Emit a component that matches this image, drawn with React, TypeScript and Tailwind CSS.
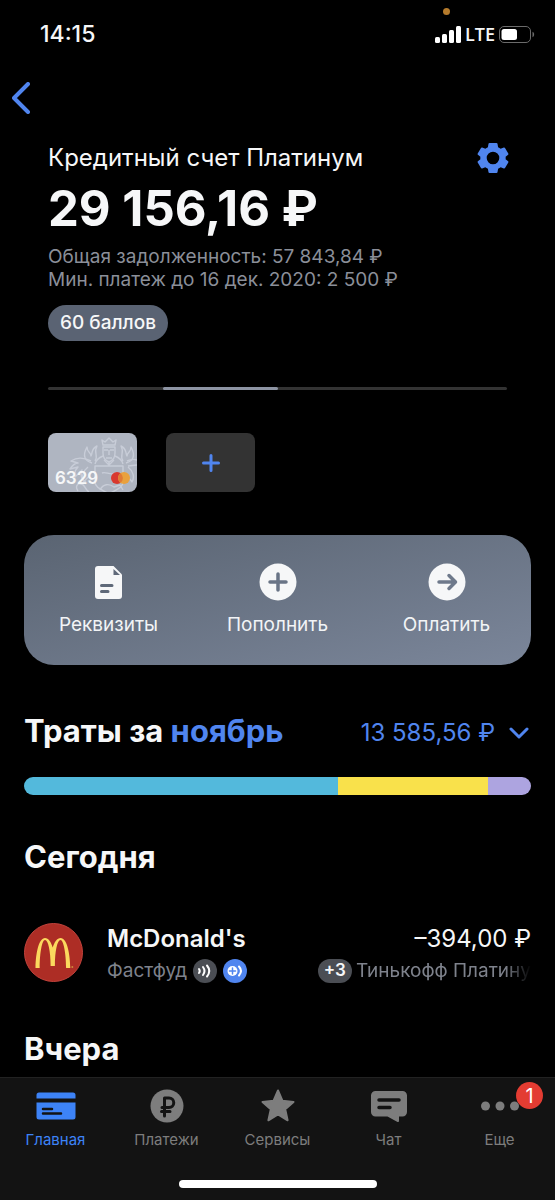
import type { ReactNode } from "react";

const spending = [
  { label: "Категория 1", share: 62, color: "bg-[#53b9dc]" },
  { label: "Категория 2", share: 29.6, color: "bg-[#f9e14b]" },
  { label: "Категория 3", share: 8.4, color: "bg-[#ada4e0]" },
];

function StatusBar() {
  return (
    <div className="flex h-[68px] items-center justify-between pl-10 pr-5">
      <span className="text-[23px] font-medium">14:15</span>
      <div className="relative flex items-center gap-1">
        <span className="absolute -top-3 left-2 h-[7px] w-[7px] rounded-full bg-[#b57b2c]" />
        <svg width="26" height="17" viewBox="0 0 26 17" fill="#fff">
          <rect x="0" y="11" width="5" height="6" rx="1.5" />
          <rect x="7" y="8" width="5" height="9" rx="1.5" />
          <rect x="14" y="4" width="5" height="13" rx="1.5" />
          <rect x="21" y="0" width="5" height="17" rx="1.5" />
        </svg>
        <span className="font-['Open_Sans',sans-serif] text-lg leading-7 font-semibold">LTE</span>
        <svg width="36" height="17" viewBox="0 0 36 17" fill="none">
          <rect x="0.5" y="0.5" width="31" height="16" rx="4.5" stroke="#6b6b6b" />
          <rect x="2.5" y="3" width="15.5" height="11" rx="2.5" fill="#fff" />
          <path d="M33.5 5.8c2.2.8 2.2 4.6 0 5.4z" fill="#6b6b6b" />
        </svg>
      </div>
    </div>
  );
}

function GearIcon() {
  return (
    <svg width="32" height="32" viewBox="0 0 32 32" fill="#5085ef" fillRule="evenodd">
      <path d="M11.500 1.800Q11.700 1 12.500 1h7q.8 0 1 .8l.6 3.400q1.400.6 2.600 1.500l3.100-1.200q.8-.3 1.200.4l3.300 5.600q.4.7-.2 1.200l-2.500 2.100q.2 1.200 0 2.400l2.500 2.100q.6.5.2 1.200l-3.300 5.600q-.4.7-1.200.4l-3.100-1.200q-1.200.9-2.600 1.500l-.6 3.400q-.2.8-1 .8h-7q-.8 0-1-.8l-.6-3.400q-1.400-.6-2.600-1.500l-3.100 1.200q-.8.3-1.200-.4L.7 20.500q-.4-.7.2-1.200l2.500-2.100q-.2-1.200 0-2.400L.9 12.700q-.6-.5-.2-1.200L4 5.900q.4-.7 1.200-.4l3.100 1.200q1.200-.9 2.600-1.500zM16 9.700a6.300 6.300 0 1 0 0 12.600 6.300 6.300 0 1 0 0-12.600z" />
    </svg>
  );
}

function BankCard() {
  return (
    <a
      href="#card-6329"
      className="relative block h-[59px] w-[89px] overflow-hidden rounded-lg bg-[#afb5c1]"
    >
      <svg
        className="absolute inset-0"
        width="89"
        height="59"
        viewBox="0 0 89 59"
        fill="none"
        stroke="#c8cdd8"
        strokeWidth="1.4"
        strokeLinejoin="round"
      >
        <path d="M54 7l3 2 4-4 4 4 3-2-1 5H55zM55 14v6c0 5 3 8 6 9 3-1 6-4 6-9v-6zM56 17h4M62 17h4M61 17v5M58 25h6" />
        <path d="M55 23c-5 2-7 4-8 8M67 23c5 2 7 4 8 8M56 27l5 5 5-5M61 29v4M47 33h28v16c0 6-8 8-14 12-6-4-14-6-14-12z" />
        <path d="M44 30c-7-2-10-7-5-16 0 6 4 5 4 9 2-4 0-7 6-10-4 7 2 10-2 15M78 30c7-2 10-7 5-16 0 6-4 5-4 9-2-4 0-7-6-10 4 7-2 10 2 15" />
        <path d="M43 28c-8-4-14-4-20 0l7 2c-4 0-6 3-8 6l8-2c-3 3-4 6-3 10l7-7c-2 6 0 10 4 12M79 28c4-2 7-2 10-1M80 33l9-1M40 34c-5 4-7 10-4 15 2-4 6-5 7-9M80 34c5 4 7 10 4 15-2-4-6-5-7-9" />
        <path d="M30 58c-3-4-1-8 3-7 4 0 4 6 8 8M52 57c3-6 9-7 14-3l6-2 3 5M54 40c4-2 8 3 14 0" />
      </svg>
      <span className="absolute bottom-1 left-[7px] text-[17px] leading-5 font-semibold">6329</span>
      <svg className="absolute right-[7px] bottom-2" width="19" height="12" viewBox="0 0 19 12">
        <circle cx="6" cy="6" r="6" fill="#d8382f" />
        <circle cx="13" cy="6" r="6" fill="#e9a13d" />
        <path d="M9.500 1.200a6 6 0 0 1 0 9.600 6 6 0 0 1 0-9.600z" fill="#e07a35" />
      </svg>
    </a>
  );
}

function Action({ label, children }: { label: string; children: ReactNode }) {
  return (
    <button type="button" className="flex flex-1 flex-col items-center gap-2">
      <svg width="38" height="38" viewBox="0 0 38 38" fill="#f6f7f8">
        {children}
      </svg>
      <span className="text-[19px] leading-8 text-[#f2f4f6]">{label}</span>
    </button>
  );
}

function Tab({
  label,
  active = false,
  badge,
  children,
}: {
  label: string;
  active?: boolean;
  badge?: string;
  children: ReactNode;
}) {
  return (
    <a
      href="#tab"
      aria-current={active ? "page" : undefined}
      className={`relative flex flex-1 flex-col items-center gap-1.5 pt-2 ${active ? "text-[#3d83f7]" : "text-[#7d7d7d]"}`}
    >
      <svg width="40" height="40" viewBox="0 0 40 40" fill="currentColor">
        {children}
      </svg>
      <span className="text-[15px] leading-4">{label}</span>
      {badge && (
        <span className="absolute top-1 right-3 flex h-[27px] w-[27px] items-center justify-center rounded-full bg-[#e33c32] text-xl text-white">
          {badge}
        </span>
      )}
    </a>
  );
}

export default function App() {
  return (
    <div className="flex min-h-screen flex-col bg-black font-['Inter',sans-serif] text-[#f6f7f8]">
      <StatusBar />

      <header className="flex h-[60px] items-center pl-3">
        <button type="button" aria-label="Назад">
          <svg width="18" height="32" viewBox="0 0 18 32" fill="none" stroke="#5085ef" strokeWidth="4" strokeLinecap="round" strokeLinejoin="round">
            <path d="M16 2L2 16l14 14" />
          </svg>
        </button>
      </header>

      <main className="flex flex-col">
        <section className="px-12 pt-3">
          <div className="flex items-center justify-between">
            <h1 className="text-2xl leading-9">Кредитный счет Платинум</h1>
            <button type="button" aria-label="Настройки" className="-mr-0.5">
              <GearIcon />
            </button>
          </div>
          <p className="text-[49px] leading-[66px] font-bold">29 156,16 ₽</p>
          <div className="pt-[3px] text-[19px] leading-[23px] text-[#8b8f99]">
            <p>Общая задолженность: 57 843,84 ₽</p>
            <p>Мин. платеж до 16 дек. 2020: 2 500 ₽</p>
          </div>
          <button
            type="button"
            className="mt-3.5 flex h-9 items-center rounded-full bg-[#5a6373] px-3 text-[19px] font-medium"
          >
            60 баллов
          </button>

          <div className="mt-[46px] grid h-[3px] grid-cols-4 overflow-hidden rounded-full bg-[#333]">
            <span className="col-start-2 rounded-full bg-[#8d94a3]" />
          </div>

          <div className="mt-[43px] flex gap-[29px]">
            <BankCard />
            <button
              type="button"
              aria-label="Добавить карту"
              className="flex h-[59px] w-[89px] items-center justify-center rounded-lg bg-[#333]"
            >
              <svg width="18" height="18" viewBox="0 0 18 18" stroke="#5085ef" strokeWidth="3" strokeLinecap="round">
                <path d="M9 1.500v15M1.500 9h15" />
              </svg>
            </button>
          </div>
        </section>

        <section className="mx-6 mt-[43px] flex h-[130px] items-center rounded-[30px] bg-linear-to-br from-[#5a6472] to-[#7b869a] pt-1">
          <Action label="Реквизиты">
            <path d="M8 3h15.500L32 11.500V33a3 3 0 0 1-3 3H8a3 3 0 0 1-3-3V6a3 3 0 0 1 3-3z" />
            <path d="M23.500 6v6H30z" fill="#5f6979" />
            <path d="M11.500 22.500h10.500M11.500 28.500h6.500" stroke="#5f6979" strokeWidth="3" strokeLinecap="round" />
          </Action>
          <Action label="Пополнить">
            <circle cx="19" cy="19" r="18.500" />
            <path d="M19 11v16M11 19h16" stroke="#697486" strokeWidth="3.500" strokeLinecap="round" />
          </Action>
          <Action label="Оплатить">
            <circle cx="19" cy="19" r="18.500" />
            <path d="M11 19h16M21 12.500l6.500 6.500-6.500 6.500" fill="none" stroke="#6e798b" strokeWidth="3.500" strokeLinecap="round" strokeLinejoin="round" />
          </Action>
        </section>

        <section className="px-6">
          <div className="mt-11 flex items-center justify-between">
            <h2 className="text-[31px] leading-[44px] font-bold">
              Траты за <a href="#month" className="text-[#5085ef]">ноябрь</a>
            </h2>
            <button type="button" className="flex items-center gap-3.5 pt-1 pr-0.5 text-2xl text-[#5085ef]">
              13 585,56 ₽
              <svg width="20" height="12" viewBox="0 0 20 12" fill="none" stroke="currentColor" strokeWidth="3" strokeLinecap="round" strokeLinejoin="round">
                <path d="M2 2l8 8 8-8" />
              </svg>
            </button>
          </div>
          <div className="mt-6 flex h-[18px] overflow-hidden rounded-full">
            {spending.map((s) => (
              <span key={s.label} className={s.color} style={{ width: `${s.share}%` }} />
            ))}
          </div>

          <h2 className="mt-10 text-[31px] leading-[44px] font-bold">Сегодня</h2>
          <article className="mt-11 flex items-start gap-6">
            <svg width="59" height="59" viewBox="0 0 59 59" className="shrink-0">
              <circle cx="29.500" cy="29.500" r="29" fill="#ad2d25" stroke="#c2433c" />
              <path
                d="M11.500 45C11.800 29 15 15 21 15c3.500 0 6 4 7.700 9.500C30.500 19 33 15 36.700 15 42.700 15 46 29 46.300 45h-4.200C42 30 39.500 17 36.500 17c-3.200 0-5.600 11-5.600 26h-4.300c0-15-2.400-26-5.600-26-3 0-5.200 13-5.300 28z"
                fill="#fbd95e"
              />
              <circle cx="48.300" cy="44" r="1" fill="#d08a3c" />
            </svg>
            <div className="min-w-0 flex-1">
              <div className="flex items-center justify-between">
                <h3 className="text-2xl leading-8 font-semibold">McDonald's</h3>
                <span className="text-2xl leading-8">–394,00 ₽</span>
              </div>
              <div className="flex items-center justify-between">
                <div className="flex items-center gap-1.5">
                  <span className="text-[19px] leading-8 text-[#7e828c]">Фастфуд</span>
                  <svg width="24" height="24" viewBox="0 0 24 24" fill="none" stroke="#fff" strokeWidth="2" strokeLinecap="round">
                    <circle cx="12" cy="12" r="12" fill="#4b4e54" stroke="none" />
                    <path d="M6 10q1.500 2 0 4M10 8q3 4 0 8M14 6.500q4.500 5.500 0 11" />
                  </svg>
                  <svg width="24" height="24" viewBox="0 0 24 24" fill="none" strokeLinecap="round">
                    <circle cx="12" cy="12" r="12" fill="#5085ef" />
                    <circle cx="9.500" cy="12" r="5" fill="#fff" />
                    <path d="M9.500 9v6M6.500 12h6" stroke="#5085ef" strokeWidth="1.500" />
                    <path d="M16 7.500q4 4.500 0 9" stroke="#fff" strokeWidth="2" />
                  </svg>
                </div>
                <div className="flex items-center gap-1">
                  <span className="flex h-6 items-center rounded-full bg-[#4b4e54] px-1.5 text-[17px] font-semibold">+3</span>
                  <span className="text-[19px] leading-8 whitespace-nowrap text-[#7e828c] mask-r-from-85%">
                    Тинькофф Платину
                  </span>
                </div>
              </div>
            </div>
          </article>

          <h2 className="mt-10 text-[31px] leading-[44px] font-bold">Вчера</h2>
        </section>
      </main>

      <footer className="sticky bottom-0 mt-auto h-[123px] border-t border-[#222] bg-[#131313]">
        <nav className="flex">
          <Tab label="Главная" active>
            <path d="M3 6.500h34a2.500 2.500 0 0 1 2.500 2.500v3.500H.5V9A2.500 2.500 0 0 1 3 6.500zM.5 16.500h39V31a2.500 2.500 0 0 1-2.500 2.500H3A2.500 2.500 0 0 1 .5 31z" />
            <path d="M7 23h9M7 27.500h18" stroke="#131313" strokeWidth="2.500" strokeLinecap="round" />
          </Tab>
          <Tab label="Платежи">
            <circle cx="20" cy="20" r="16.500" />
            <path d="M17.500 30V12h4.500a4.500 4.500 0 0 1 0 9.500h-7M14.500 25.500h8.500" fill="none" stroke="#131313" strokeWidth="3" strokeLinecap="round" strokeLinejoin="round" />
          </Tab>
          <Tab label="Сервисы">
            <path d="M20 4.500l4.500 10.300 11 1.100-8.300 7.400 2.400 11L20 28.500l-9.600 5.800 2.400-11-8.300-7.400 11-1.100z" stroke="currentColor" strokeWidth="2" strokeLinejoin="round" />
          </Tab>
          <Tab label="Чат">
            <path d="M6.500 5h27a4.500 4.500 0 0 1 4.500 4.500V26a4.500 4.500 0 0 1-4.500 4.500H30V35q0 1.500-1.500.9L18.500 30.500h-12A4.500 4.500 0 0 1 2 26V9.500A4.500 4.500 0 0 1 6.500 5z" />
            <path d="M10 14h20M10 21.500h11" stroke="#131313" strokeWidth="3.500" strokeLinecap="round" />
          </Tab>
          <Tab label="Еще" badge="1">
            <circle cx="5.500" cy="20" r="4.500" />
            <circle cx="20" cy="20" r="4.500" />
            <circle cx="34.500" cy="20" r="4.500" />
          </Tab>
        </nav>
        <div className="mx-auto mt-8 h-2 w-[198px] rounded-full bg-white" />
      </footer>
    </div>
  );
}
